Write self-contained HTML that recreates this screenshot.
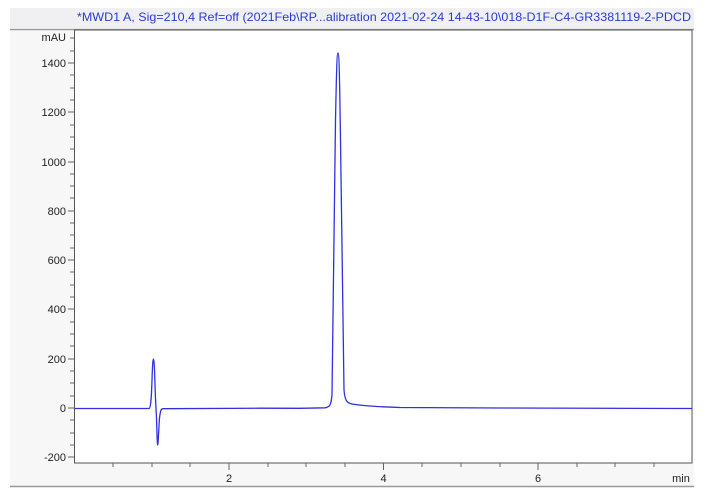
<!DOCTYPE html>
<html><head><style>
body{margin:0;width:713px;height:498px;background:#fff;overflow:hidden;font-family:"Liberation Sans",sans-serif}
</style></head><body>
<svg width="713" height="498" xmlns="http://www.w3.org/2000/svg" font-family="Liberation Sans, sans-serif" font-size="11">
<rect x="10" y="8" width="684" height="20" fill="#f0f0f2"/>
<text x="77" y="21" fill="#2a3bd6" font-size="12" textLength="614" lengthAdjust="spacingAndGlyphs">*MWD1 A, Sig=210,4 Ref=off (2021Feb\RP...alibration 2021-02-24 14-43-10\018-D1F-C4-GR3381119-2-PDCD</text>
<rect x="10" y="29" width="684" height="458" fill="#f7f7f7"/>
<line x1="10" y1="29.5" x2="694" y2="29.5" stroke="#999" stroke-width="1.5"/>
<line x1="10" y1="486.5" x2="694" y2="486.5" stroke="#999" stroke-width="1.5"/>
<rect x="74.5" y="30" width="617.5" height="433" fill="#fff" stroke="#555" stroke-width="1"/>
<g stroke="#666" stroke-width="1">
<path d="M68 63H74M68 112H74M68 162H74M68 211H74M68 260H74M68 309H74M68 359H74M68 408H74M68 457H74"/>
<path d="M70 38H74M70 51H74M70 75H74M70 88H74M70 100H74M70 125H74M70 137H74M70 149H74M70 174H74M70 186H74M70 198H74M70 223H74M70 235H74M70 248H74M70 272H74M70 285H74M70 297H74M70 322H74M70 334H74M70 346H74M70 371H74M70 383H74M70 396H74M70 420H74M70 433H74M70 445H74"/>
<path d="M229 463V470M383.5 463V470M538 463V470"/>
<path d="M113 463V467M152 463V467M190 463V467M268 463V467M306 463V467M345 463V467M422 463V467M461 463V467M500 463V467M577 463V467M615 463V467M654 463V467"/>
</g>
<g fill="#222" font-size="11" text-anchor="end">
<text x="66" y="41">mAU</text>
<text x="66" y="67">1400</text>
<text x="66" y="116">1200</text>
<text x="66" y="166">1000</text>
<text x="66" y="215">800</text>
<text x="66" y="264">600</text>
<text x="66" y="313">400</text>
<text x="66" y="363">200</text>
<text x="66" y="412">0</text>
<text x="66" y="461">-200</text>
</g>
<g fill="#222" font-size="11" text-anchor="middle">
<text x="229" y="482">2</text>
<text x="383.5" y="482">4</text>
<text x="538" y="482">6</text>
<text x="681" y="482">min</text>
</g>
<path fill="none" stroke="#3030e0" stroke-width="1.3" d="M75 408.5L149 408.5C151 408 151.5 395 152 380C152.6 362 153 359 153.5 359C154 359 154.5 366 155 385C155.5 402 156 408 156.5 418C157 435 157.3 445 157.7 445C158.2 445 158.6 430 159.5 418C160.5 410 161 409 163 408.7L260 408.2L300 408.3L325 407.8C330 407 331 405 332 395C333 370 334 250 335.5 120C336.5 70 337 53 338 53C339 53 339.5 70 340.5 140C341.5 250 343 360 344 390C345 401 347 403 352 404C360 405.5 370 406.5 400 407.5L500 408L692 408.5"/>
</svg>
</body></html>
